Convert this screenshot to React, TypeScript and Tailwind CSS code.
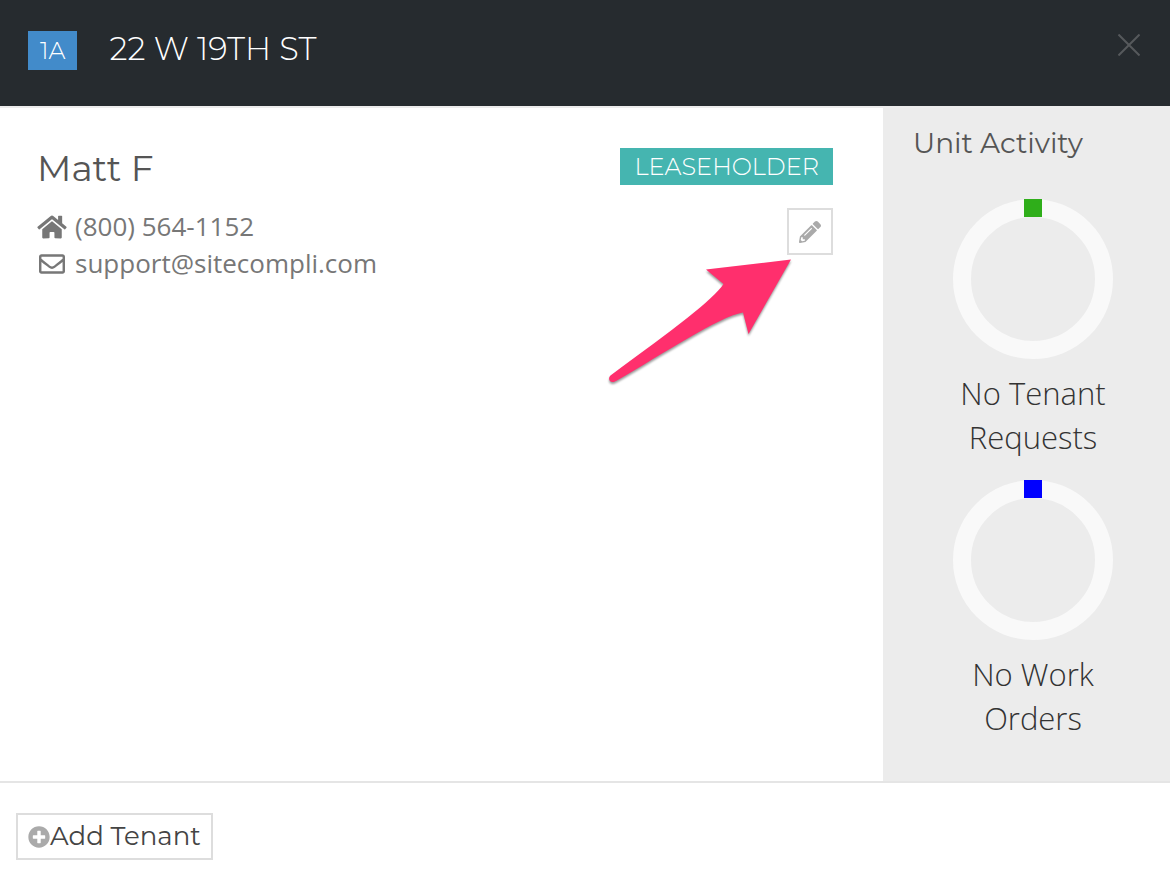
import { FaHome, FaPencilAlt, FaPlusCircle, FaRegEnvelope } from 'react-icons/fa';

const activity = [
  { label: 'No Tenant Requests', marker: 'fill-[#2fae1a]' },
  { label: 'No Work Orders', marker: 'fill-[#0000ff]' },
];

function Header() {
  return (
    <header className="flex items-start justify-between bg-[#262b2f] border-b-2 border-[#ececec] px-7 pt-7 pb-9">
      <div className="flex items-center gap-8">
        <span className="bg-[#428bca] text-white text-[24px] leading-[39px] font-light px-3 mt-[3px]">1A</span>
        <h1 className="text-white text-[32px] leading-[42px] font-light">22 W 19TH ST</h1>
      </div>
      <button type="button" aria-label="Close" className="mt-1 p-[2px] text-[#56595c]">
        <svg viewBox="0 0 22 22" className="size-[22px]" fill="none" stroke="currentColor" strokeWidth="2">
          <path d="M0.5 0.5L21.5 21.5M21.5 0.5L0.5 21.5" />
        </svg>
      </button>
    </header>
  );
}

function Pointer() {
  return (
    <svg
      viewBox="0 0 190 132"
      aria-hidden="true"
      className="absolute top-[49px] right-[38px] w-[190px] h-[132px] max-w-none pointer-events-none drop-shadow-[0_2px_1px_rgba(0,0,0,0.4)]"
    >
      <path
        fill="#ff2f6d"
        d="M186 2.5L101 12.5L118.500 27C108 43 70 71 5.500 118.500C3 121 4 125 7.500 125C9 125 10 124.500 11 124C60 96 113 60 138 55.500L143.500 77Z"
      />
    </svg>
  );
}

function Tenant() {
  return (
    <section className="flex-1 flex items-start justify-between bg-white pl-[37px] pr-[50px] pt-10">
      <div>
        <h2 className="text-[#555] text-[36px] leading-[40px] font-normal mb-5">Matt F</h2>
        <ul className="font-['Open_Sans',sans-serif] text-[#777] text-[26px] leading-[37px]">
          <li className="flex items-center gap-2">
            <FaHome className="w-[30px] h-[26px]" />
            <a href="tel:8005641152">(800) 564-1152</a>
          </li>
          <li className="flex items-center gap-2">
            <FaRegEnvelope className="w-[30px] h-[26px]" />
            <a href="mailto:support@sitecompli.com">support@sitecompli.com</a>
          </li>
        </ul>
      </div>
      <div className="flex flex-col items-end gap-[23px]">
        <span className="bg-[#45b5b0] text-white text-[24px] leading-[37px] font-light px-[14px]">LEASEHOLDER</span>
        <div className="relative">
          <button
            type="button"
            aria-label="Edit tenant"
            className="flex items-center justify-center w-[46px] h-[47px] border-2 border-[#ddd] text-[#aaa]"
          >
            <FaPencilAlt className="size-[22px]" />
          </button>
          <Pointer />
        </div>
      </div>
    </section>
  );
}

function Ring({ marker }: { marker: string }) {
  return (
    <svg viewBox="0 0 160 160" className="size-40" aria-hidden="true">
      <circle cx="80" cy="80" r="71" fill="none" stroke="#f9f9f9" strokeWidth="18" />
      <rect x="71" width="18" height="18" className={marker} />
    </svg>
  );
}

function UnitActivity() {
  return (
    <aside className="w-[287px] bg-[#ececec] pt-4 pb-10">
      <h2 className="text-[#555] text-[28px] leading-[38px] font-normal px-[30px] mb-[37px]">Unit Activity</h2>
      <div className="flex flex-col items-center gap-[21px] pl-[13px]">
        {activity.map((item) => (
          <div key={item.label} className="flex flex-col items-center gap-3">
            <Ring marker={item.marker} />
            <p className="w-40 text-center font-['Open_Sans',sans-serif] font-light text-[#333] text-[31px] leading-[44px]">
              {item.label}
            </p>
          </div>
        ))}
      </div>
    </aside>
  );
}

export default function App() {
  return (
    <div className="min-h-screen flex flex-col bg-white font-['Montserrat','Inter',sans-serif]">
      <Header />
      <main className="flex-1 flex">
        <Tenant />
        <UnitActivity />
      </main>
      <footer className="border-t-2 border-[#e5e5e5] px-4 pt-[30px] pb-[18px]">
        <button
          type="button"
          className="flex items-center border-2 border-[#ddd] bg-white px-[10px] text-[#444] text-[26px] leading-[43px] font-normal"
        >
          <FaPlusCircle className="size-[22px] text-[#aaa]" />
          Add Tenant
        </button>
      </footer>
    </div>
  );
}
